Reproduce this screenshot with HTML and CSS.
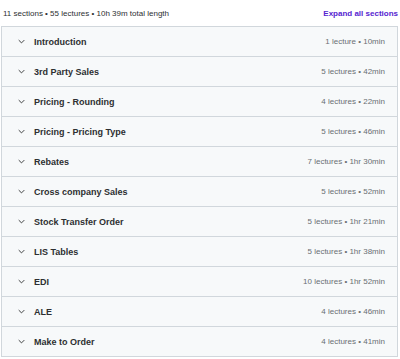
FILE: index.html
```html
<!DOCTYPE html>
<html lang="en">
<head>
    <meta charset="UTF-8">
    <meta name="viewport" content="width=device-width, initial-scale=1.0">
    <title>Course content</title>
    <link rel="stylesheet" href="styles.css">
</head>
<body>
    <div class="content">
        <!-- Summary line -->
        <div class="summary">
            <span class="summary-text">11 sections • 55 lectures • 10h 39m total length</span>
            <button class="expand">Expand all sections</button>
        </div>

        <!-- Sections -->
        <div class="sections">
            <div class="section">
                <svg class="chevron" viewBox="0 0 10 6"><path d="M1 1l4 4 4-4"/></svg>
                <span class="title">Introduction</span>
                <span class="meta">1 lecture • 10min</span>
            </div>
            <div class="section">
                <svg class="chevron" viewBox="0 0 10 6"><path d="M1 1l4 4 4-4"/></svg>
                <span class="title">3rd Party Sales</span>
                <span class="meta">5 lectures • 42min</span>
            </div>
            <div class="section">
                <svg class="chevron" viewBox="0 0 10 6"><path d="M1 1l4 4 4-4"/></svg>
                <span class="title">Pricing - Rounding</span>
                <span class="meta">4 lectures • 22min</span>
            </div>
            <div class="section">
                <svg class="chevron" viewBox="0 0 10 6"><path d="M1 1l4 4 4-4"/></svg>
                <span class="title">Pricing - Pricing Type</span>
                <span class="meta">5 lectures • 46min</span>
            </div>
            <div class="section">
                <svg class="chevron" viewBox="0 0 10 6"><path d="M1 1l4 4 4-4"/></svg>
                <span class="title">Rebates</span>
                <span class="meta">7 lectures • 1hr 30min</span>
            </div>
            <div class="section">
                <svg class="chevron" viewBox="0 0 10 6"><path d="M1 1l4 4 4-4"/></svg>
                <span class="title">Cross company Sales</span>
                <span class="meta">5 lectures • 52min</span>
            </div>
            <div class="section">
                <svg class="chevron" viewBox="0 0 10 6"><path d="M1 1l4 4 4-4"/></svg>
                <span class="title">Stock Transfer Order</span>
                <span class="meta">5 lectures • 1hr 21min</span>
            </div>
            <div class="section">
                <svg class="chevron" viewBox="0 0 10 6"><path d="M1 1l4 4 4-4"/></svg>
                <span class="title">LIS Tables</span>
                <span class="meta">5 lectures • 1hr 38min</span>
            </div>
            <div class="section">
                <svg class="chevron" viewBox="0 0 10 6"><path d="M1 1l4 4 4-4"/></svg>
                <span class="title">EDI</span>
                <span class="meta">10 lectures • 1hr 52min</span>
            </div>
            <div class="section">
                <svg class="chevron" viewBox="0 0 10 6"><path d="M1 1l4 4 4-4"/></svg>
                <span class="title">ALE</span>
                <span class="meta">4 lectures • 46min</span>
            </div>
            <div class="section">
                <svg class="chevron" viewBox="0 0 10 6"><path d="M1 1l4 4 4-4"/></svg>
                <span class="title">Make to Order</span>
                <span class="meta">4 lectures • 41min</span>
            </div>
        </div>
    </div>
</body>
</html>
```

FILE: styles.css
```css
body {
    font-family: "Liberation Sans", Arial, sans-serif;
    background-color: #ffffff;
    color: #2d2f31;
    margin: 0;
}

.content {
    padding: 0 2px 0 1px;
}

.summary {
    display: flex;
    justify-content: space-between;
    align-items: center;
    height: 26px;
    padding-left: 2px;
}

.summary-text {
    font-size: 8px;
    color: #2d2f31;
}

.expand {
    background: none;
    border: none;
    padding: 0;
    font-family: inherit;
    font-size: 8px;
    font-weight: bold;
    color: #5624d0;
    cursor: pointer;
}

.sections {
    border: 1px solid #d1d7dc;
    border-bottom: none;
}

.section {
    display: flex;
    align-items: center;
    height: 29px;
    padding: 0 12px 0 16px;
    background-color: #f7f9fa;
    border-bottom: 1px solid #d1d7dc;
}

.chevron {
    width: 7px;
    height: 5px;
    fill: none;
    stroke: #2d2f31;
    stroke-width: 1.3;
    margin-right: 9px;
}

.title {
    flex: 1;
    font-size: 9px;
    font-weight: bold;
}

.meta {
    font-size: 8px;
    color: #6a6f73;
}
```
